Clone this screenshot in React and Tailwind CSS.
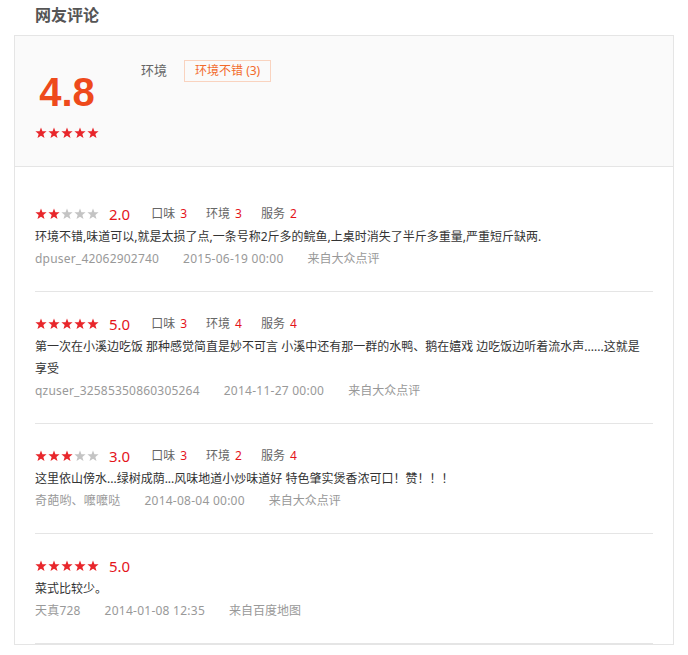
import React from "react";

const reviews = [
  {
    stars: 2,
    score: "2.0",
    sub: [
      ["口味", 3],
      ["环境", 3],
      ["服务", 2],
    ],
    text: ["环境不错,味道可以,就是太损了点,一条号称2斤多的鲩鱼,上桌时消失了半斤多重量,严重短斤缺两."],
    user: "dpuser_42062902740",
    date: "2015-06-19 00:00",
    from: "来自大众点评",
  },
  {
    stars: 5,
    score: "5.0",
    sub: [
      ["口味", 3],
      ["环境", 4],
      ["服务", 4],
    ],
    text: [
      "第一次在小溪边吃饭 那种感觉简直是妙不可言 小溪中还有那一群的水鸭、鹅在嬉戏 边吃饭边听着流水声......这就是",
      "享受",
    ],
    user: "qzuser_32585350860305264",
    date: "2014-11-27 00:00",
    from: "来自大众点评",
  },
  {
    stars: 3,
    score: "3.0",
    sub: [
      ["口味", 3],
      ["环境", 2],
      ["服务", 4],
    ],
    text: ["这里依山傍水...绿树成荫...风味地道小炒味道好 特色肇实煲香浓可口！赞！！！"],
    user: "奇葩哟、嚒嚒哒",
    date: "2014-08-04 00:00",
    from: "来自大众点评",
  },
  {
    stars: 5,
    score: "5.0",
    sub: [],
    text: ["菜式比较少。"],
    user: "天真728",
    date: "2014-01-08 12:35",
    from: "来自百度地图",
  },
];

const Star = ({ on }) => (
  <svg width="12" height="12" viewBox="0 0 12 12">
    <polygon
      points="6,0.4 7.45,4.2 11.6,4.35 8.35,6.9 9.5,11 6,8.65 2.5,11 3.65,6.9 0.4,4.35 4.55,4.2"
      fill={on ? "#e8262b" : "#c4c4c4"}
    />
  </svg>
);

const Stars = ({ n }) => (
  <div className="flex gap-[1px]">
    {[0, 1, 2, 3, 4].map((i) => (
      <Star key={i} on={i < n} />
    ))}
  </div>
);

const Review = ({ r }) => (
  <div className="border-b border-[#e5e5e5] pt-[20px] pb-[21px]">
    <div className="flex items-center h-[24px]">
      <Stars n={r.stars} />
      <span className="ml-[10px] text-[15px] leading-[24px] text-[#e4141b]">{r.score}</span>
      {r.sub.length > 0 && (
        <div className="flex ml-[21px] text-[12px] leading-[24px]">
          {r.sub.map(([k, v]) => (
            <span key={k} className="mr-[19px] text-[#666]">
              {k}
              <span className="ml-[5px] text-[#e4141b]">{v}</span>
            </span>
          ))}
        </div>
      )}
    </div>
    <div className="text-[12px] leading-[22px] text-[#333]">
      {r.text.map((t, i) => (
        <div key={i}>{t}</div>
      ))}
    </div>
    <div className="text-[12px] leading-[22px] text-[#999]">
      <span className="mr-[24px] tracking-[0.2px]">{r.user}</span>
      <span className="mr-[24px] tracking-[0.25px]">{r.date}</span>
      <span>{r.from}</span>
    </div>
  </div>
);

const App = () => {
  return (
    <div
      className="w-[688px] h-[655px] overflow-hidden bg-white"
      style={{ fontFamily: '"Noto Sans", "Noto Sans CJK SC", sans-serif' }}
    >
      <div className="h-[35px] pl-[35px] pt-[4px] text-[16px] leading-[22px] font-bold text-[#555]">
        网友评论
      </div>

      <div className="ml-[14px] w-[660px] border border-[#e5e5e5]">
        {/* summary */}
        <div className="flex h-[131px] bg-[#fafafa] border-b border-[#e5e5e5]">
          <div className="ml-[20px] w-[64px] pt-[36px] flex flex-col items-center">
            <div
              className="text-[40px] leading-[40px] font-bold text-[#ee4a1b]"
              style={{ fontFamily: '"Liberation Sans", Arial, sans-serif' }}
            >
              4.8
            </div>
            <div className="mt-[15px]">
              <Stars n={5} />
            </div>
          </div>
          <div className="ml-[42px] pt-[16px] flex items-center h-[54px] self-start">
            <span className="text-[13px] text-[#666]">环境</span>
            <span className="ml-[17px] h-[22px] px-[10px] border border-[#f9d3bf] text-[12px] leading-[20px] text-[#f26a2a]">
              环境不错 (3)
            </span>
          </div>
        </div>

        {/* list */}
        <div className="pt-[15px] px-[20px]">
          {reviews.map((r, i) => (
            <Review key={i} r={r} />
          ))}
        </div>
      </div>
    </div>
  );
};

export default App;
